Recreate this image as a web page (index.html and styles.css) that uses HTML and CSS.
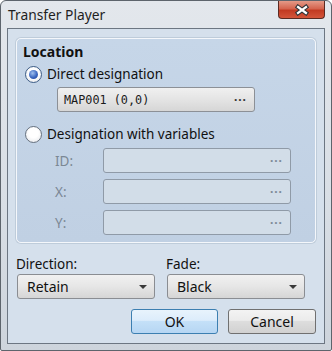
FILE: index.html
```html
<!DOCTYPE html>
<html lang="en">
<head>
    <meta charset="UTF-8">
    <title>Transfer Player</title>
    <link rel="stylesheet" href="styles.css">
</head>
<body>

    <div class="window">
        <div class="titlebar">
            <span class="title">Transfer Player</span>
            <div class="close-btn">
                <svg width="16" height="12" viewBox="-8 -6 16 12">
                    <path d="M-4,-3 L4,3 M4,-3 L-4,3" stroke="#2e3338" stroke-width="4.4" stroke-linecap="square" fill="none"/>
                    <path d="M-4,-3 L4,3 M4,-3 L-4,3" stroke="#ffffff" stroke-width="2.2" stroke-linecap="square" fill="none"/>
                </svg>
            </div>
        </div>

        <div class="client">
            <div class="group">
                <div class="legend">Location</div>

                <div class="radio-row">
                    <span class="radio checked"></span>
                    <span>Direct designation</span>
                </div>
                <div class="field map-field">
                    <span class="mono">MAP001 (0,0)</span>
                    <span class="dots">&middot;&middot;&middot;</span>
                </div>

                <div class="radio-row second">
                    <span class="radio"></span>
                    <span>Designation with variables</span>
                </div>
                <div class="var-row">
                    <span class="var-label">ID:</span>
                    <div class="field disabled"><span></span><span class="dots">&middot;&middot;&middot;</span></div>
                </div>
                <div class="var-row">
                    <span class="var-label">X:</span>
                    <div class="field disabled"><span></span><span class="dots">&middot;&middot;&middot;</span></div>
                </div>
                <div class="var-row">
                    <span class="var-label">Y:</span>
                    <div class="field disabled"><span></span><span class="dots">&middot;&middot;&middot;</span></div>
                </div>
            </div>

            <div class="options">
                <div class="option">
                    <div class="option-label">Direction:</div>
                    <div class="select"><span>Retain</span><span class="arrow"></span></div>
                </div>
                <div class="option">
                    <div class="option-label">Fade:</div>
                    <div class="select"><span>Black</span><span class="arrow"></span></div>
                </div>
            </div>

            <div class="buttons">
                <div class="btn btn-ok">OK</div>
                <div class="btn">Cancel</div>
            </div>
        </div>
    </div>

</body>
</html>
```

FILE: styles.css
```css
body {
    margin: 0;
    font-family: "Noto Sans", "Open Sans", sans-serif;
    font-size: 13.5px;
    color: #111;
}
.window {
    width: 332px;
    height: 351px;
    box-sizing: border-box;
    border: 1px solid #5d646c;
    border-radius: 6px 6px 2px 2px;
    background: linear-gradient(to bottom, #e3e7ec, #d8dee5 60%, #cdd4dc);
    padding: 0 6px 6px;
    display: flex;
    flex-direction: column;
}
.titlebar {
    height: 27px;
    display: flex;
    justify-content: space-between;
    align-items: flex-start;
}
.title {
    padding-left: 1px;
    line-height: 28px;
    font-size: 13.8px;
    color: #1e1e1e;
}
.close-btn {
    width: 47px;
    height: 18px;
    box-sizing: border-box;
    border: 1px solid #5b2a22;
    border-top: none;
    border-radius: 0 0 4px 4px;
    background: linear-gradient(to bottom, #e49a88, #d4644e 45%, #c23a22 55%, #d4553a);
    display: flex;
    align-items: center;
    justify-content: center;
}
.client {
    flex: 1;
    border: 1px solid #6c7682;
    background-color: #d5e0ec;
    padding: 9px 8px 0;
    display: flex;
    flex-direction: column;
}
.group {
    border: 1px solid #f4f7fb;
    border-radius: 5px;
    background: linear-gradient(to bottom, #c6d6e8, #c0d0e3);
    box-shadow: 0 0 0 1px rgba(150, 165, 185, 0.35);
    padding: 4px 0 7px;
}
.legend {
    padding-left: 6px;
    line-height: 18px;
    font-weight: bold;
    font-size: 14px;
}
.radio-row {
    margin-top: 3px;
    height: 20px;
    padding-left: 8px;
    display: flex;
    align-items: center;
    gap: 5px;
}
.radio-row.second {
    margin-top: 12px;
}
.radio {
    width: 17px;
    height: 17px;
    box-sizing: border-box;
    border-radius: 50%;
    border: 1px solid #66717e;
    background: radial-gradient(circle at 50% 40%, #ffffff 40%, #e2e4e8);
    display: flex;
    align-items: center;
    justify-content: center;
}
.radio.checked {
    border-color: #3d5d86;
}
.radio.checked::after {
    content: "";
    width: 9px;
    height: 9px;
    border-radius: 50%;
    background: radial-gradient(circle at 40% 35%, #9fc0ee, #3a66c0 55%, #1d3f8e);
}
.field {
    height: 25px;
    box-sizing: border-box;
    border: 1px solid #8c9096;
    border-radius: 3px;
    display: flex;
    align-items: center;
    justify-content: space-between;
    padding: 0 7px 0 6px;
}
.map-field {
    margin: 3px 0 0 40px;
    width: 198px;
    background: linear-gradient(to bottom, #f0f0f0, #e4e4e4 50%, #d6d6d6);
}
.mono {
    font-family: "DejaVu Sans Mono", "Liberation Mono", monospace;
    font-size: 11.8px;
    color: #1a1a1a;
}
.dots {
    font-weight: bold;
    font-size: 12px;
    letter-spacing: 1px;
    color: #333;
}
.field.disabled {
    width: 188px;
    background-color: #d2dde8;
    border-color: #8f9aa7;
}
.field.disabled .dots {
    color: #7c8896;
}
.var-row {
    display: flex;
    align-items: center;
    padding-left: 38px;
    margin-top: 6px;
}
.radio-row.second + .var-row {
    margin-top: 4px;
}
.var-label {
    width: 48px;
    color: #7b8794;
}
.options {
    display: flex;
    gap: 11px;
    margin-top: 12px;
}
.option {
    width: 139px;
}
.option-label {
    line-height: 18px;
}
.select {
    margin: 1px 0 0 1px;
    height: 25px;
    box-sizing: border-box;
    border: 1px solid #8a8d92;
    border-radius: 3px;
    background: linear-gradient(to bottom, #f1f1f1, #e6e6e6 50%, #d5d5d5);
    display: flex;
    align-items: center;
    justify-content: space-between;
    padding: 0 7px 0 9px;
    font-size: 14px;
}
.arrow {
    width: 0;
    height: 0;
    border-left: 4px solid transparent;
    border-right: 4px solid transparent;
    border-top: 4px solid #3a3a3a;
}
.buttons {
    display: flex;
    justify-content: flex-end;
    gap: 10px;
    margin-top: 10px;
}
.btn {
    width: 88px;
    height: 25px;
    box-sizing: border-box;
    border: 1px solid #707070;
    border-radius: 3px;
    background: linear-gradient(to bottom, #f3f3f3, #ebebeb 45%, #dddddd 50%, #d1d1d1);
    display: flex;
    align-items: center;
    justify-content: center;
    font-size: 14px;
}
.btn-ok {
    width: 87px;
    border-color: #3c7fb1;
    background: linear-gradient(to bottom, #e8f3fc, #dcecfb 45%, #c4e0f8 50%, #b6d6f3);
}
```
